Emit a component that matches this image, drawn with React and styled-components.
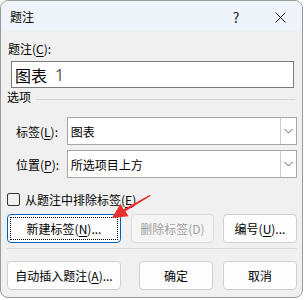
import React from 'react';
import styled, { createGlobalStyle } from 'styled-components';

const GlobalStyle = createGlobalStyle`
  body {
    margin: 0;
    background: #ffffff;
    font-family: "Noto Sans CJK SC", "Microsoft YaHei", sans-serif;
  }
`;

export default function App() {
  return (
    <>
      <GlobalStyle />
      <Window>
        <TitleBar>
          <Title>题注</Title>
          <HelpButton>?</HelpButton>
          <CloseButton>
            <svg width="11" height="11" viewBox="0 0 11 11">
              <path d="M0.5 0.5 L10.5 10.5 M10.5 0.5 L0.5 10.5" stroke="#1a1a1a" strokeWidth="1" fill="none" />
            </svg>
          </CloseButton>
        </TitleBar>
        <Content>
          <CaptionLabel>题注(<u>C</u>):</CaptionLabel>
          <CaptionInput>
            图表<Number>1</Number>
          </CaptionInput>
          <GroupHeader>
            <span>选项</span>
            <GroupLine />
          </GroupHeader>
          <FieldRow $first>
            <FieldLabel>标签(<u>L</u>):</FieldLabel>
            <Combo>
              <ComboText>图表</ComboText>
              <DropButton><Chevron /></DropButton>
            </Combo>
          </FieldRow>
          <FieldRow>
            <FieldLabel>位置(<u>P</u>):</FieldLabel>
            <Combo>
              <ComboText>所选项目上方</ComboText>
              <DropButton><Chevron /></DropButton>
            </Combo>
          </FieldRow>
          <CheckRow>
            <CheckBox />
            <span>从题注中排除标签(<u>E</u>)</span>
          </CheckRow>
          <ButtonRow $top={7}>
            <Button $width={114} $focused>新建标签(<u>N</u>)...</Button>
            <Button $width={83} $gap={10} disabled>删除标签(D)</Button>
            <Button $width={74} $gap={9}>编号(<u>U</u>)...</Button>
          </ButtonRow>
          <Separator />
          <ButtonRow $top={12}>
            <Button $width={114}>自动插入题注(<u>A</u>)...</Button>
            <Button $width={74} $gap={18}>确定</Button>
            <Button $width={74} $gap={10}>取消</Button>
          </ButtonRow>
        </Content>
        <Arrow width="303" height="298" viewBox="0 0 303 298">
          <polygon
            points="150,194.8 123.5,209.2 120.5,203.8 112,218 128.5,216.2 125.5,211.2 150.6,196"
            fill="#e8302c"
          />
        </Arrow>
      </Window>
    </>
  );
}

function Chevron() {
  return (
    <svg width="9" height="6" viewBox="0 0 9 6">
      <path d="M0.5 1 L4.5 5 L8.5 1" stroke="#606060" strokeWidth="1" fill="none" />
    </svg>
  );
}

const Window = styled.div`
  position: relative;
  width: 303px;
  height: 298px;
  box-sizing: border-box;
  border: 1px solid #9a9a9a;
  border-radius: 8px;
  overflow: hidden;
  background: #f0f0f0;
  display: flex;
  flex-direction: column;
  font-size: 12px;
  color: #000000;
`;

const TitleBar = styled.div`
  height: 30px;
  flex-shrink: 0;
  background: #eef4f9;
  display: flex;
  align-items: center;
  padding-left: 9px;
`;

const Title = styled.div`
  flex: 1;
  line-height: 16px;
  padding-top: 2px;
`;

const HelpButton = styled.div`
  width: 46px;
  text-align: center;
  font-size: 14px;
  padding-top: 1px;
  color: #1a1a1a;
`;

const CloseButton = styled.div`
  width: 43px;
  height: 30px;
  display: flex;
  align-items: center;
  justify-content: center;
  padding-top: 2px;
`;

const Content = styled.div`
  display: flex;
  flex-direction: column;
  padding: 10px 5px 0 6px;

  u {
    text-decoration-thickness: 1px;
    text-underline-offset: 2px;
  }
`;

const CaptionLabel = styled.div`
  margin-left: 1px;
  line-height: 16px;
`;

const CaptionInput = styled.div`
  margin: 4px 0 0 4px;
  width: 283px;
  height: 27px;
  box-sizing: border-box;
  border: 1px solid #7a7a7a;
  background: #ffffff;
  display: flex;
  align-items: center;
  padding-left: 3px;
  font-size: 16px;
`;

const Number = styled.span`
  margin-left: 8px;
  color: #555555;
  font-family: "Open Sans", sans-serif;
  font-weight: 400;
`;

const GroupHeader = styled.div`
  margin-top: 1px;
  height: 16px;
  line-height: 16px;
  display: flex;
  align-items: center;
`;

const GroupLine = styled.div`
  flex: 1;
  height: 1px;
  margin: 4px 2px 0 5px;
  background: #d6d6d6;
`;

const FieldRow = styled.div`
  display: flex;
  align-items: center;
  margin-top: ${p => (p.$first ? 12 : 5)}px;
`;

const FieldLabel = styled.div`
  width: 51px;
  padding-left: 9px;
`;

const Combo = styled.div`
  width: 231px;
  height: 28px;
  box-sizing: border-box;
  border: 1px solid #a6a6a6;
  background: #ffffff;
  display: flex;
`;

const ComboText = styled.div`
  flex: 1;
  display: flex;
  align-items: center;
  padding-left: 3px;
`;

const DropButton = styled.div`
  width: 16px;
  margin: 0;
  box-sizing: border-box;
  border-left: 1px solid #cdcdcd;
  display: flex;
  align-items: center;
  justify-content: center;
`;

const CheckRow = styled.div`
  margin-top: 13px;
  height: 16px;
  display: flex;
  align-items: center;
  gap: 5px;
`;

const CheckBox = styled.div`
  width: 13px;
  height: 13px;
  box-sizing: border-box;
  border: 1px solid #333333;
  border-radius: 2px;
`;

const ButtonRow = styled.div`
  display: flex;
  margin-top: ${p => p.$top}px;
`;

const Button = styled.button`
  position: relative;
  width: ${p => p.$width}px;
  height: 29px;
  margin: 0 0 0 ${p => p.$gap || 0}px;
  padding: 0;
  box-sizing: border-box;
  border: 1px solid ${p => (p.$focused ? '#005fb8' : '#d0d0d0')};
  border-radius: 4px;
  background: #fdfdfd;
  font-family: inherit;
  font-size: 12px;
  color: #000000;

  &:disabled {
    color: #a0a0a0;
    border-color: #dcdcdc;
    background: #f5f5f5;
  }

  ${p => p.$focused && `
    &::after {
      content: "";
      position: absolute;
      inset: 2px;
      border: 1px dotted #000000;
    }
  `}
`;

const Separator = styled.div`
  margin-top: 5px;
  width: 290px;
  height: 1px;
  background: #d8d8d8;
`;

const Arrow = styled.svg`
  position: absolute;
  left: -1px;
  top: -1px;
  pointer-events: none;
`;
